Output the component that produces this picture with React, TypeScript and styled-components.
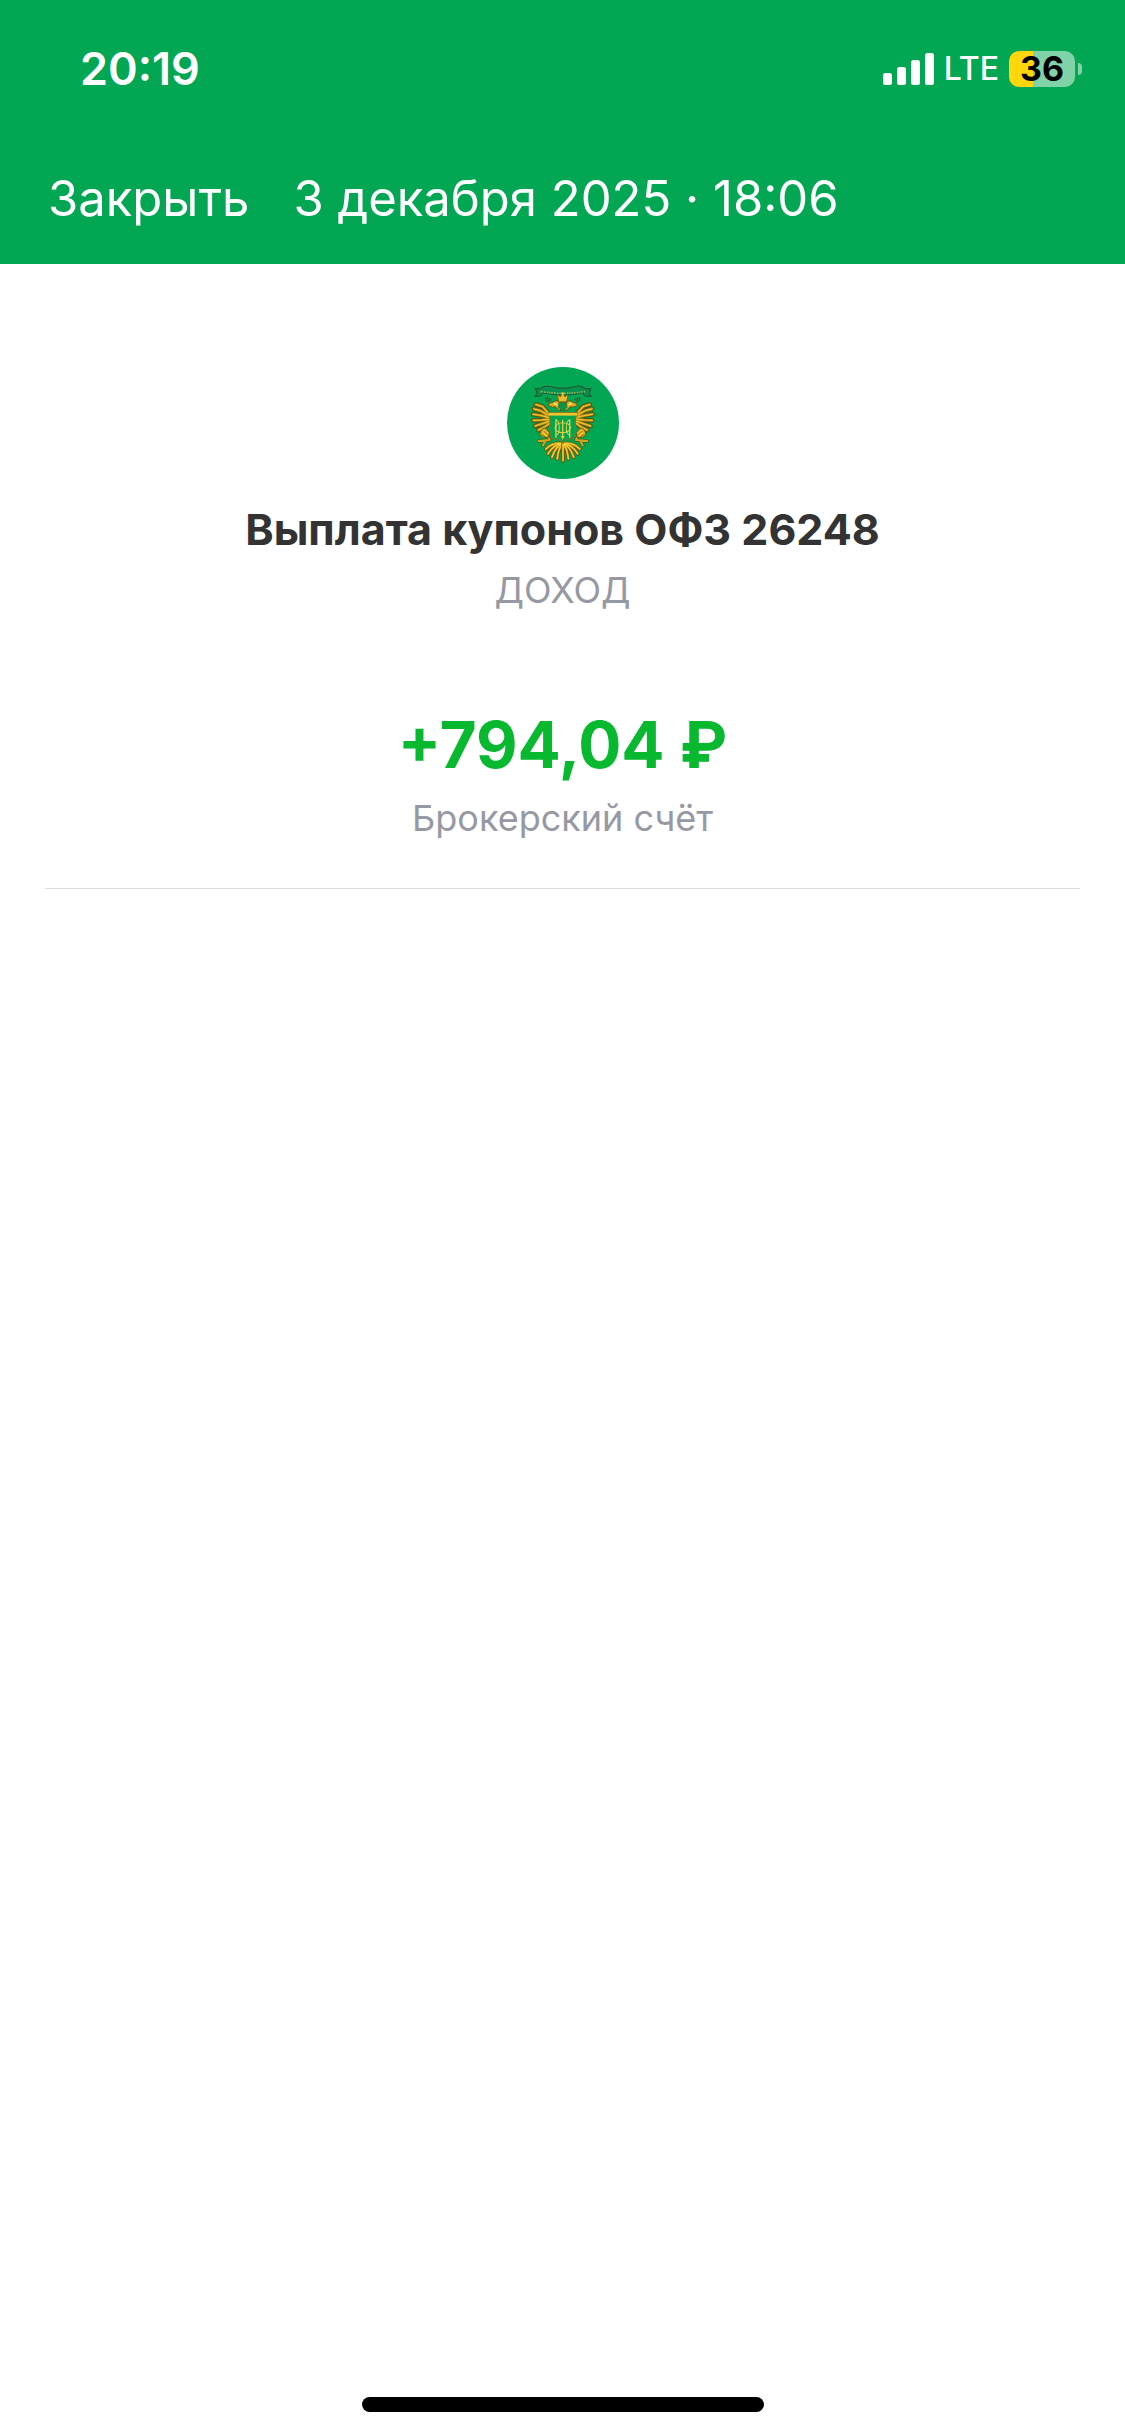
import React from 'react'
import styled, { createGlobalStyle } from 'styled-components'

const GlobalStyle = createGlobalStyle`
  * {
    box-sizing: border-box;
  }

  body {
    margin: 0;
    background: #fff;
    font-family: Inter, 'Liberation Sans', sans-serif;
  }
`

const Screen = styled.div`
  display: flex;
  flex-direction: column;
  min-height: 100vh;
`

const Header = styled.header`
  color: #fff;
  background: #02a653;
`

const StatusBar = styled.div`
  display: flex;
  align-items: center;
  justify-content: space-between;
  height: 138px;
  padding: 0 43px 0 80px;
`

const Clock = styled.time`
  font-size: 45px;
  font-weight: 600;
  line-height: 48px;
`

const StatusIcons = styled.div`
  display: flex;
  align-items: center;
  gap: 10px;
`

const Network = styled.span`
  font-size: 32px;
  font-weight: 500;
  line-height: 36px;
`

const BatteryWrap = styled.div`
  display: flex;
  align-items: center;
  gap: 3px;
`

const Battery = styled.div<{ level: number }>`
  width: 66px;
  height: 36px;
  border-radius: 10px;
  color: #000;
  font-size: 34px;
  font-weight: 700;
  line-height: 36px;
  text-align: center;
  background: ${props => `linear-gradient(to right, #ffd60a ${props.level}%, #80d3a9 ${props.level}%)`};
`

const BatteryCap = styled.div`
  width: 4px;
  height: 12px;
  border-radius: 0 4px 4px 0;
  background: #80d3a9;
`

const NavBar = styled.nav`
  display: flex;
  align-items: flex-start;
  gap: 44px;
  height: 126px;
  padding: 31px 48px 0;
`

const CloseButton = styled.button`
  padding: 0;
  border: none;
  color: inherit;
  background: none;
  font-family: inherit;
  font-size: 49px;
  line-height: 60px;
  cursor: pointer;
`

const NavTitle = styled.h1`
  margin: 0;
  font-size: 49px;
  font-weight: 400;
  line-height: 60px;
`

const Content = styled.main`
  display: flex;
  flex-direction: column;
  align-items: center;
  margin: 0 45px;
  padding: 103px 0 48px;
  border-bottom: 1px solid #dedede;
  text-align: center;
`

const Title = styled.h2`
  margin: 24px 0 0;
  color: #333;
  font-size: 43px;
  font-weight: 700;
  line-height: 52px;
`

const Caption = styled.p`
  margin: 0;
  color: #9699a3;
  font-size: 36px;
  line-height: 44px;
`

const Kind = styled(Caption)`
  margin-top: 13px;
`

const Amount = styled.p`
  margin: 93px 0 11px;
  color: #08b82f;
  font-size: 64px;
  font-weight: 700;
  line-height: 80px;
`

const HomeIndicator = styled.div`
  width: 402px;
  height: 15px;
  margin: auto auto 24px;
  border-radius: 8px;
  background: #000;
`

const Signal = () => (
  <svg width='51' height='32' viewBox='0 0 51 32' fill='#fff' aria-hidden='true'>
    <rect x='0' y='20' width='9' height='12' rx='2.5' />
    <rect x='14' y='14' width='9' height='18' rx='2.5' />
    <rect x='28' y='7' width='9' height='25' rx='2.5' />
    <rect x='42' y='0' width='9' height='32' rx='2.5' />
  </svg>
)

const wing = 'M146 160 L128 140 L108 134 M146 166 L121 152 L102 147 M146 172 L120 166 L100 163 M147 178 L124 180 L101 181 M148 184 L126 191 L106 198 M149 190 L134 201 L116 210'
const tail = 'M183 250 Q158 246 138 267 M184 251 Q160 254 144 281 M185 252 Q168 258 156 291 M186 253 Q175 266 172 296 M188 252 V301'
const claw = 'M149 240 L116 243 M137 242 L129 256 M149 238 L143 229'

// One half of the eagle, the other one is mirrored around the centre line
const EagleHalf = () => (
  <g strokeLinejoin='round' strokeLinecap='round'>
    <path d={wing} fill='none' stroke='#4d5413' strokeWidth='14' />
    <path d={wing} fill='none' stroke='#c1921a' strokeWidth='8' />
    <path d={wing} fill='none' stroke='#f0c530' strokeWidth='3' />
    <path d={tail} fill='none' stroke='#4d5413' strokeWidth='11' />
    <path d={tail} fill='none' stroke='#cf9d18' strokeWidth='7' />
    <path d={tail} fill='none' stroke='#fad43a' strokeWidth='3' />
    <path d={claw} fill='none' stroke='#4d5413' strokeWidth='10' />
    <path d={claw} fill='none' stroke='#d1a51f' strokeWidth='6' />
    <g stroke='#4d5413' strokeWidth='2.5'>
      <path
        fill='#dda91c'
        d='M180 153 Q172 149 169 143 Q164 138 158 142 L145 137 L148 130 L159 127 Q169 118 178 127 L184 140 Z'
      />
      <path fill='#dba61b' d='M122 214 Q129 200 139 206 L149 218 L145 233 L130 232 L120 224 Z' />
    </g>
    <path fill='#f8df67' d='M157 132 L168 128 L175 137 L167 135 Z' />
    <path fill='none' stroke='#fad545' strokeWidth='3' d='M128 218 L140 227 M132 211 L143 220' />
    <path fill='none' stroke='#6a5b10' strokeWidth='2' d='M127 224 L136 230 M133 214 L143 223' />
  </g>
)

const Emblem = () => (
  <svg width='112' height='112' viewBox='22 22 334 334' role='img' aria-label='ОФЗ'>
    <circle cx='189' cy='189' r='167' fill='#02a653' />
    <path
      d='M106 86 L119 87 Q134 77 147 79 Q188 92 231 79 Q244 77 257 87 L272 86 L267 99 L273 110 L253 108 L249 99 Q188 113 128 99 L124 108 L105 110 L112 98 Z'
      fill='#079150'
      stroke='#27502d'
      strokeWidth='3'
      strokeLinejoin='round'
    />
    <path d='M122 95 Q188 106 256 95' fill='none' stroke='#9fc060' strokeWidth='5' strokeDasharray='3 2 2 3' />
    <path d='M138 113 L153 119 L145 126 L138 122 Z M239 113 L224 119 L232 126 L239 122 Z' fill='#138b47' stroke='#2d672d' strokeWidth='3' />
    <EagleHalf />
    <g transform='translate(377 0) scale(-1 1)'>
      <EagleHalf />
    </g>
    <path d='M172 103 L181 111 L188 99 L195 111 L204 103 L200 126 L176 126 Z' fill='#f0b82a' stroke='#735d13' strokeWidth='2.5' strokeLinejoin='round' />
    <circle cx='188' cy='101' r='4' fill='#ecc42c' />
    <path d='M177 129 L199 129 L201 143 L188 153 L175 143 Z' fill='#05984d' stroke='#59600f' strokeWidth='2' />
    <path d='M145 158 H232 V168 H226 V224 Q225 234 211 236 L197 240 L188 248 L179 240 L164 236 Q151 234 150 224 V168 H145 Z' fill='#05a550' stroke='#80781b' strokeWidth='3' />
    <path d='M145 159 H232 V167 H145 Z' fill='#efc433' />
    <g fill='none' stroke='#d8d04a' strokeWidth='4'>
      <path d='M188 179 V232 M168 178 V233 M209 178 V233' />
      <path d='M168 180 Q178 182 178 203 Q178 222 168 226 M209 180 Q199 182 199 203 Q199 222 209 226' strokeWidth='3' />
      <ellipse cx='188' cy='203' rx='23' ry='15' strokeWidth='3' />
    </g>
    <path d='M182 228 H194 L188 239 Z' fill='#f2c82b' />
  </svg>
)

const App: React.FC = () => {
  return (
    <>
      <GlobalStyle />
      <Screen>
        <Header>
          <StatusBar>
            <Clock>20:19</Clock>
            <StatusIcons>
              <Signal />
              <Network>LTE</Network>
              <BatteryWrap>
                <Battery level={36}>36</Battery>
                <BatteryCap />
              </BatteryWrap>
            </StatusIcons>
          </StatusBar>
          <NavBar>
            <CloseButton type='button'>Закрыть</CloseButton>
            <NavTitle>3 декабря 2025 · 18:06</NavTitle>
          </NavBar>
        </Header>

        <Content>
          <Emblem />
          <Title>Выплата купонов ОФЗ 26248</Title>
          <Kind>ДОХОД</Kind>
          <Amount>+794,04 ₽</Amount>
          <Caption>Брокерский счёт</Caption>
        </Content>

        <HomeIndicator />
      </Screen>
    </>
  )
}

export default App
